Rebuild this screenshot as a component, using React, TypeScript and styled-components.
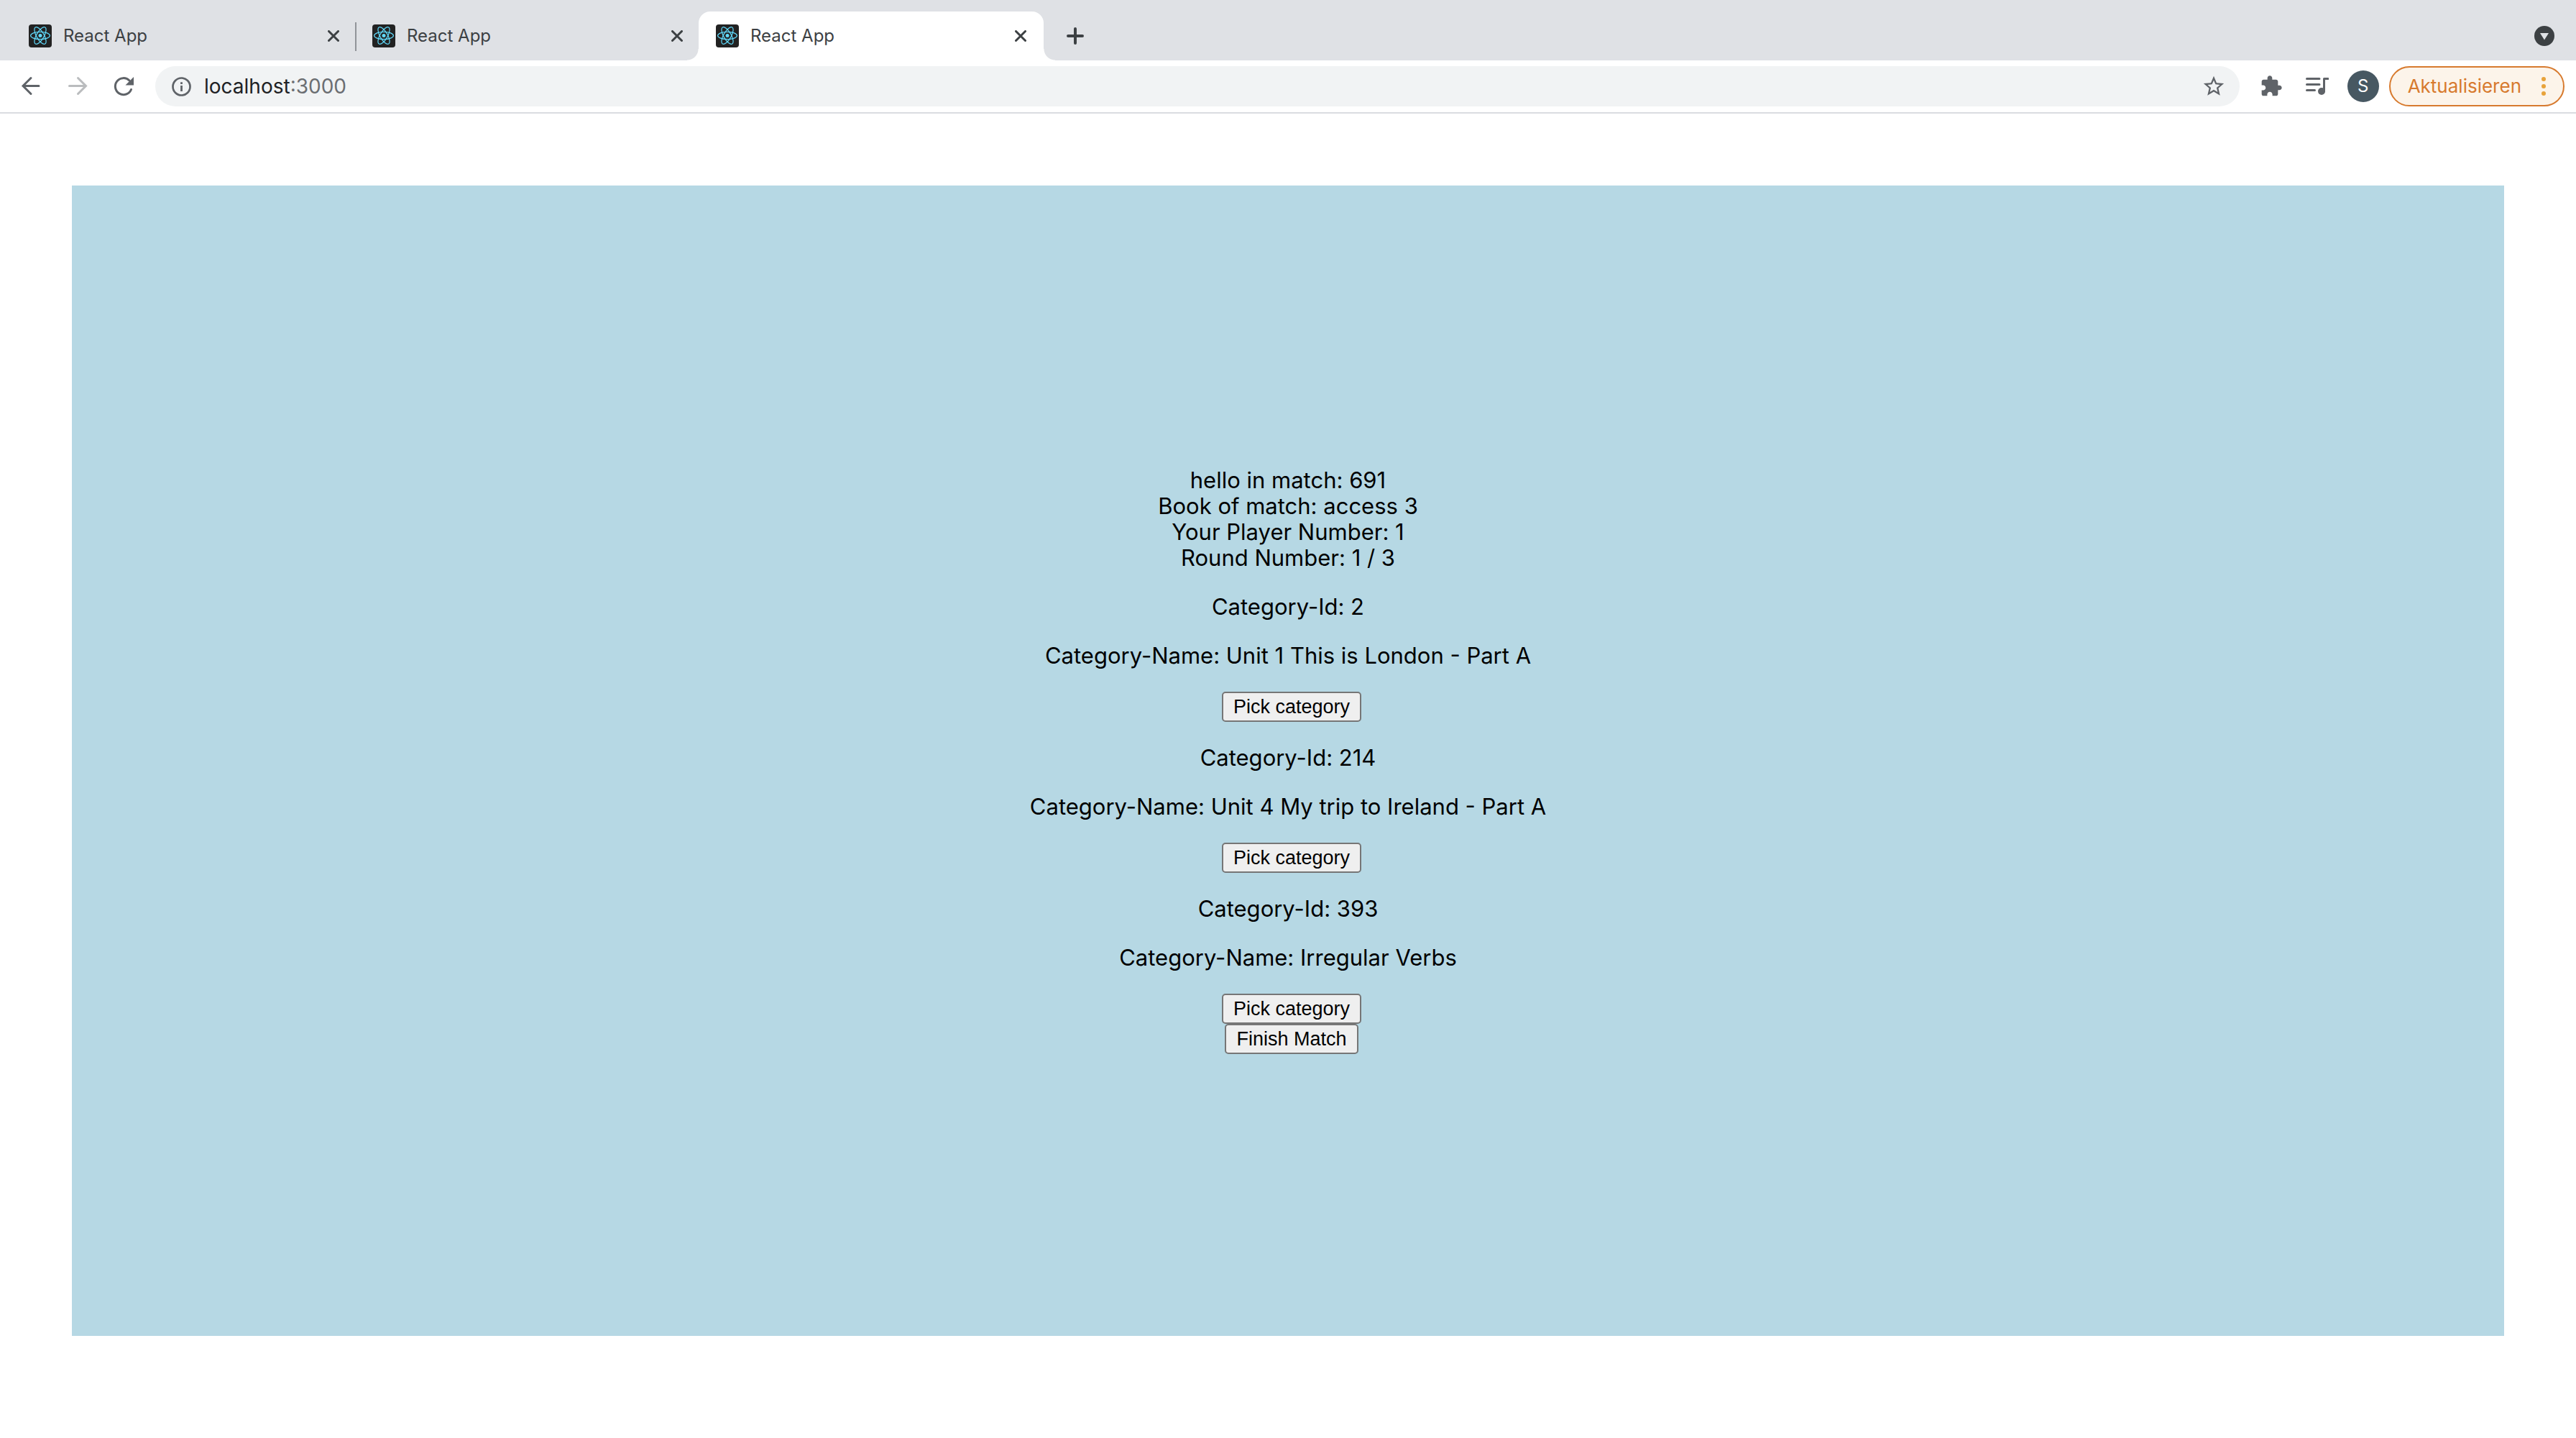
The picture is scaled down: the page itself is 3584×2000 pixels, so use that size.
import React from "react";
import styled, { createGlobalStyle } from "styled-components";

const GlobalStyle = createGlobalStyle`
  *, *::before, *::after {
    box-sizing: border-box;
  }
  body {
    margin: 0;
    background: #ffffff;
    color: #000000;
    font-family: Inter, "Liberation Sans", sans-serif;
  }
  button, input {
    margin: 0;
    font-family: inherit;
  }
  svg {
    display: block;
    flex: none;
  }
`;

/* ---------- Tab strip ---------- */

const TabStrip = styled.header`
  display: flex;
  align-items: flex-start;
  height: 84px;
  padding: 16px 28px 0 16px;
  background: #dfe1e5;
`;

const TabItem = styled.div<{ $active?: boolean; $divided?: boolean }>`
  position: relative;
  display: flex;
  align-items: center;
  width: 480px;
  height: 68px;
  margin-right: -2px;
  padding: 0 24px;
  border-radius: 16px 16px 0 0;
  background: ${(p) => (p.$active ? "#ffffff" : "transparent")};

  /* Outward curves at the foot of the selected tab */
  &::before {
    content: "";
    display: ${(p) => (p.$active ? "block" : "none")};
    position: absolute;
    left: -16px;
    right: -16px;
    bottom: 0;
    height: 16px;
    background:
      radial-gradient(circle at 0 0, transparent 15px, #ffffff 16px) left / 16px 16px no-repeat,
      radial-gradient(circle at 100% 0, transparent 15px, #ffffff 16px) right / 16px 16px no-repeat;
  }

  &::after {
    content: "";
    display: ${(p) => (p.$divided ? "block" : "none")};
    position: absolute;
    right: 0;
    top: 15px;
    width: 2px;
    height: 40px;
    background: #919499;
  }
`;

const TabLabel = styled.button`
  display: flex;
  flex: 1;
  align-items: center;
  gap: 16px;
  min-width: 0;
  padding: 0;
  border: 0;
  background: none;
  color: #3c4043;
  font-size: 24px;
  line-height: 32px;
  text-align: left;
`;

const IconButton = styled.button<{ $size?: number }>`
  display: flex;
  flex: none;
  align-items: center;
  justify-content: center;
  width: ${(p) => p.$size ?? 32}px;
  height: ${(p) => p.$size ?? 32}px;
  padding: 0;
  border: 0;
  background: none;
  color: #5f6368;

  &:disabled {
    color: #babcbe;
  }
`;

const TabClose = styled(IconButton)`
  width: 16px;
  color: #3c4043;
`;

const NewTab = styled(IconButton)`
  height: 68px;
  margin-left: 30px;
  color: #3c4043;
`;

const TabSearch = styled(IconButton)`
  height: 68px;
  margin-left: auto;
  color: #3c4043;
`;

/* ---------- Toolbar ---------- */

const Toolbar = styled.nav`
  display: flex;
  align-items: center;
  height: 74px;
  padding: 0 16px 0 28px;
  border-bottom: 2px solid #dadce0;
  background: #ffffff;
`;

const NavGroup = styled.div`
  display: flex;
  gap: 32px;
`;

const AddressBar = styled.form`
  display: flex;
  flex: 1;
  align-items: center;
  height: 56px;
  margin-left: 28px;
  padding: 0 20px;
  border-radius: 28px;
  background: #f1f3f4;
  font-size: 28px;
`;

const Host = styled.label`
  margin-left: 16px;
  color: #202124;
  line-height: 36px;
`;

const AddressInput = styled.input`
  flex: 1;
  min-width: 0;
  padding: 0;
  border: 0;
  outline: 0;
  background: none;
  color: #6b6e72;
  font-size: 28px;
  line-height: 36px;
`;

const Actions = styled.div`
  display: flex;
  align-items: center;
  gap: 24px;
  margin-left: 22px;
`;

const Avatar = styled.button`
  width: 44px;
  height: 44px;
  padding: 0;
  border: 0;
  border-radius: 50%;
  background: #475862;
  color: #ffffff;
  font-size: 24px;
  line-height: 44px;
`;

const UpdateButton = styled.button`
  display: flex;
  align-items: center;
  gap: 28px;
  height: 56px;
  margin-left: 14px;
  padding: 0 24px;
  border: 2px solid #d77a2e;
  border-radius: 28px;
  background: #fcf4ea;
  color: #d77a2e;
  font-size: 26px;
  line-height: 32px;
`;

/* ---------- Match page ---------- */

const MatchPanel = styled.main`
  display: flex;
  flex-direction: column;
  align-items: center;
  justify-content: center;
  min-height: 80vh;
  margin: 100px;
  background: #b6d8e4;
  font-size: 31px;
  line-height: 36px;
  text-align: center;
`;

const Category = styled.section`
  display: flex;
  flex-direction: column;
  align-items: center;
`;

const CategoryText = styled.p`
  margin: 32px 0 0;
`;

const MatchButton = styled.button<{ $spaced?: boolean }>`
  height: 42px;
  margin: ${(p) => (p.$spaced ? "32px" : "0")} 0 0 10px;
  padding: 0 14px;
  border: 2px solid #767676;
  border-radius: 5px;
  background: #efefef;
  color: #000000;
  font-family: "Liberation Sans", Arial, sans-serif;
  font-size: 27px;
  line-height: 36px;
`;

/* ---------- Icons ---------- */

const ReactLogo = () => (
  <svg width="32" height="32" viewBox="0 0 32 32" aria-hidden="true">
    <rect width="32" height="32" rx="4" fill="#222222" />
    <circle cx="16" cy="15.5" r="2.5" fill="#61dafb" />
    <g fill="none" stroke="#61dafb" strokeWidth="1.2">
      <ellipse cx="16" cy="15.5" rx="13.4" ry="5.2" />
      <ellipse cx="16" cy="15.5" rx="13.4" ry="5.2" transform="rotate(60 16 15.5)" />
      <ellipse cx="16" cy="15.5" rx="13.4" ry="5.2" transform="rotate(120 16 15.5)" />
    </g>
  </svg>
);

const CloseIcon = () => (
  <svg width="16" height="16" viewBox="0 0 16 16" aria-hidden="true">
    <path d="M1.5 1.5l13 13M14.5 1.5l-13 13" stroke="currentColor" strokeWidth="3" strokeLinecap="round" />
  </svg>
);

const PlusIcon = () => (
  <svg width="24" height="24" viewBox="0 0 24 24" aria-hidden="true">
    <path d="M12 2v20M2 12h20" stroke="currentColor" strokeWidth="4" strokeLinecap="round" />
  </svg>
);

const TabSearchIcon = () => (
  <svg width="28" height="28" viewBox="0 0 28 28" aria-hidden="true">
    <circle cx="14" cy="14" r="14" fill="currentColor" />
    <path d="M8 10h12l-6 9.5z" fill="#dfe1e5" />
  </svg>
);

const BackIcon = () => (
  <svg width="32" height="32" viewBox="0 0 32 32" fill="none" stroke="currentColor" strokeWidth="3" strokeLinecap="round" aria-hidden="true">
    <path d="M26 15.500H4M15 4.500l-11 11 11 11" />
  </svg>
);

const ForwardIcon = () => (
  <svg width="32" height="32" viewBox="0 0 32 32" fill="none" stroke="currentColor" strokeWidth="3" strokeLinecap="round" aria-hidden="true">
    <path d="M4.500 15.500H27M16.500 4.500l11 11-11 11" />
  </svg>
);

const ReloadIcon = () => (
  <svg width="32" height="32" viewBox="0 0 32 32" aria-hidden="true">
    <path d="M26.500 20.500A11.500 11.500 0 1 1 24 8" fill="none" stroke="currentColor" strokeWidth="3" strokeLinecap="round" />
    <path d="M30 3v11.500H18.500z" fill="currentColor" />
  </svg>
);

const InfoIcon = () => (
  <svg width="32" height="32" viewBox="0 0 32 32" aria-hidden="true">
    <circle cx="16.500" cy="16.500" r="12" fill="none" stroke="currentColor" strokeWidth="2.700" />
    <path d="M16.500 15v8M16.500 10.200v2.800" stroke="currentColor" strokeWidth="2.800" />
  </svg>
);

const StarIcon = () => (
  <svg width="34" height="34" viewBox="0 0 24 24" aria-hidden="true">
    <path
      fill="currentColor"
      d="M22 9.240l-7.190-.62L12 2 9.190 8.630 2 9.240l5.460 4.730L5.820 21 12 17.270 18.180 21l-1.630-7.030L22 9.240zM12 15.400l-3.760 2.270 1-4.280-3.320-2.880 4.380-.38L12 6.100l1.710 4.040 4.380.38-3.320 2.880 1 4.280L12 15.400z"
    />
  </svg>
);

const ExtensionIcon = () => (
  <svg width="32" height="32" viewBox="0 0 24 24" aria-hidden="true">
    <path
      fill="currentColor"
      d="M20.500 11H19V7c0-1.100-.9-2-2-2h-4V3.500C13 2.120 11.880 1 10.500 1S8 2.120 8 3.500V5H4c-1.100 0-1.990.9-1.990 2v3.800H3.500c1.490 0 2.700 1.210 2.700 2.700s-1.210 2.700-2.700 2.700H2V20c0 1.100.9 2 2 2h3.800v-1.500c0-1.490 1.210-2.700 2.700-2.700 1.490 0 2.700 1.210 2.700 2.700V22H17c1.100 0 2-.9 2-2v-4h1.500c1.380 0 2.500-1.120 2.500-2.500S21.880 11 20.500 11z"
    />
  </svg>
);

const PlaylistIcon = () => (
  <svg width="32" height="32" viewBox="0 0 32 32" aria-hidden="true">
    <path d="M1.500 5.500h17.500M1.500 13.500h17.500M1.500 21.500h11" stroke="currentColor" strokeWidth="3" strokeLinecap="round" />
    <circle cx="22" cy="23" r="5" fill="currentColor" />
    <path d="M25.500 23V5.500H31" fill="none" stroke="currentColor" strokeWidth="3" strokeLinecap="round" strokeLinejoin="round" />
  </svg>
);

const MenuDots = () => (
  <svg width="6" height="26" viewBox="0 0 6 26" fill="#e8a33a" aria-hidden="true">
    <circle cx="3" cy="3" r="3" />
    <circle cx="3" cy="13" r="3" />
    <circle cx="3" cy="23" r="3" />
  </svg>
);

/* ---------- Data ---------- */

const tabs = [
  { id: 1, title: "React App", divided: true, active: false },
  { id: 2, title: "React App", divided: false, active: false },
  { id: 3, title: "React App", divided: false, active: true },
];

const categories = [
  { id: 2, name: "Unit 1 This is London - Part A" },
  { id: 214, name: "Unit 4 My trip to Ireland - Part A" },
  { id: 393, name: "Irregular Verbs" },
];

const match = { id: 691, book: "access 3", player: 1, round: 1, rounds: 3 };

export default function App() {
  return (
    <>
      <GlobalStyle />
      <TabStrip>
        {tabs.map((tab) => (
          <TabItem key={tab.id} $active={tab.active} $divided={tab.divided}>
            <TabLabel type="button" aria-pressed={tab.active}>
              <ReactLogo />
              {tab.title}
            </TabLabel>
            <TabClose type="button" aria-label="Tab schließen">
              <CloseIcon />
            </TabClose>
          </TabItem>
        ))}
        <NewTab type="button" aria-label="Neuer Tab">
          <PlusIcon />
        </NewTab>
        <TabSearch type="button" aria-label="Tabs durchsuchen">
          <TabSearchIcon />
        </TabSearch>
      </TabStrip>

      <Toolbar>
        <NavGroup>
          <IconButton type="button" aria-label="Zurück">
            <BackIcon />
          </IconButton>
          <IconButton type="button" aria-label="Vorwärts" disabled>
            <ForwardIcon />
          </IconButton>
          <IconButton type="button" aria-label="Neu laden">
            <ReloadIcon />
          </IconButton>
        </NavGroup>
        <AddressBar onSubmit={(event) => event.preventDefault()}>
          <IconButton type="button" aria-label="Websiteinformationen">
            <InfoIcon />
          </IconButton>
          <Host htmlFor="address">localhost</Host>
          <AddressInput id="address" type="text" defaultValue=":3000" />
          <IconButton type="button" aria-label="Lesezeichen">
            <StarIcon />
          </IconButton>
        </AddressBar>
        <Actions>
          <IconButton type="button" aria-label="Erweiterungen" $size={44}>
            <ExtensionIcon />
          </IconButton>
          <IconButton type="button" aria-label="Mediensteuerung" $size={36}>
            <PlaylistIcon />
          </IconButton>
          <Avatar type="button">S</Avatar>
        </Actions>
        <UpdateButton type="button">
          Aktualisieren
          <MenuDots />
        </UpdateButton>
      </Toolbar>

      <MatchPanel>
        <div>hello in match: {match.id}</div>
        <div>Book of match: {match.book}</div>
        <div>Your Player Number: {match.player}</div>
        <div>
          Round Number: {match.round} / {match.rounds}
        </div>
        {categories.map((category) => (
          <Category key={category.id}>
            <CategoryText>Category-Id: {category.id}</CategoryText>
            <CategoryText>Category-Name: {category.name}</CategoryText>
            <MatchButton type="button" $spaced>
              Pick category
            </MatchButton>
          </Category>
        ))}
        <MatchButton type="button">Finish Match</MatchButton>
      </MatchPanel>
    </>
  );
}
